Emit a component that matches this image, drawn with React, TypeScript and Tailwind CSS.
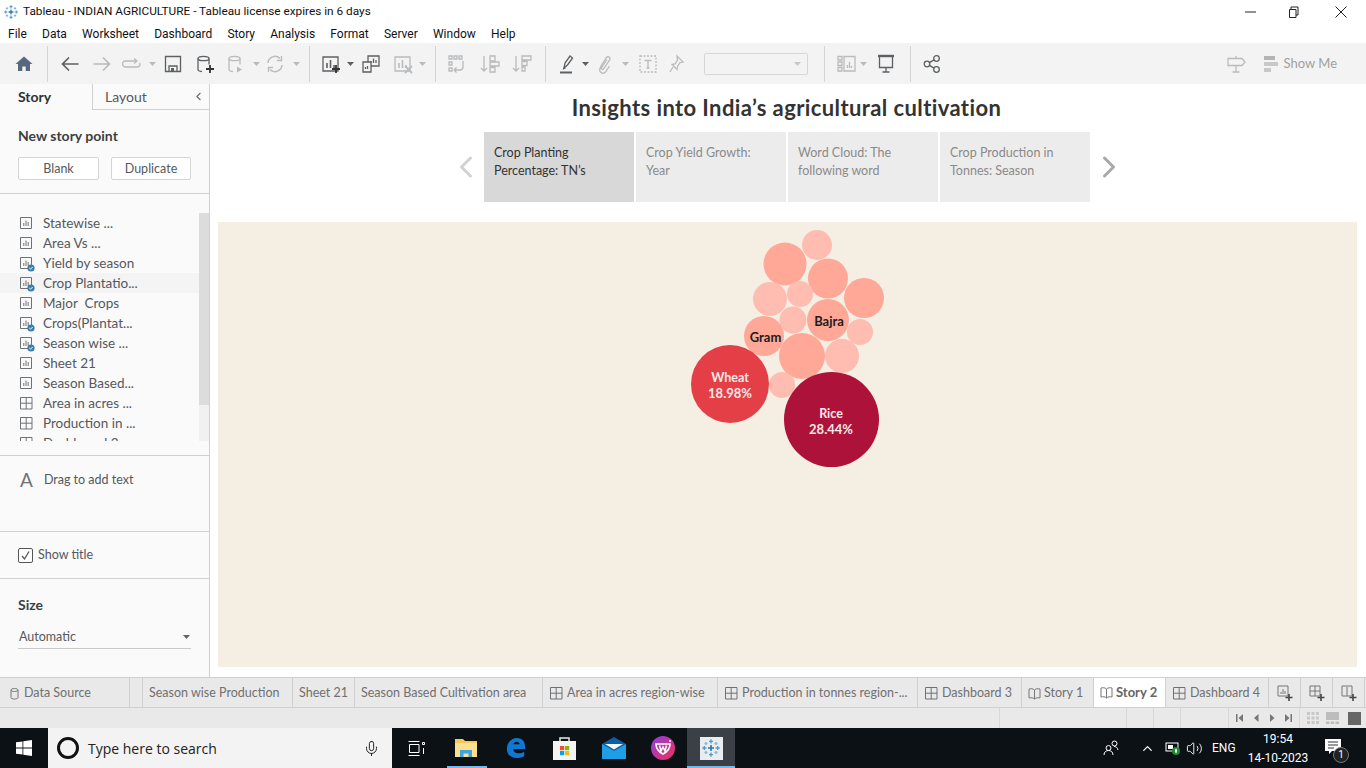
import React from "react";
import { ChevronLeft, ChevronRight, ChevronUp, Mic, Volume2 } from "lucide-react";

const GREY = "#5d6063";
const DIS = "#b9bbbd";

const menus = ["File", "Data", "Worksheet", "Dashboard", "Story", "Analysis", "Format", "Server", "Window", "Help"];

const TableauLogo = ({ size = 16 }: { size?: number }) => (
    <svg width={size} height={size} viewBox="0 0 16 16">
        <g strokeWidth="1.1" fill="none">
            <path d="M8 1v3.400M6.400 2.700h3.200M8 11.600V15M6.400 13.300h3.200M1 8h3.400M2.700 6.400v3.200M11.600 8H15M13.300 6.400v3.200" stroke="#5b9ac8" />
            <path d="M4 3.200v2.400M2.800 4.400h2.400M12 3.200v2.400M10.800 4.400h2.400M4 10.400v2.400M2.800 11.600h2.400M12 10.400v2.400M10.800 11.600h2.400" stroke="#86b6d8" />
            <path d="M8 5.600v4.800M5.600 8h4.800" stroke="#2f75a8" strokeWidth="1.300" />
        </g>
    </svg>
);

const Caret = ({ color = DIS }: { color?: string }) => (
    <svg width="7" height="4" viewBox="0 0 7 4"><path d="M0 0h7L3.500 4z" fill={color} /></svg>
);

const Sep = ({ className = "" }: { className?: string }) => <div className={`w-px h-[36px] bg-[#d4d4d4] shrink-0 ${className}`} />;

const Ico = ({ children }: { children: React.ReactNode }) => (
    <svg width="20" height="20" viewBox="0 0 20 20" fill="none" strokeWidth="1.3">{children}</svg>
);

// icon slot, default 20 wide; left margin on each one sets the toolbar spacing
const Slot = ({ className = "w-[20px]", children }: { className?: string; children: React.ReactNode }) => (
    <div className={`flex items-center justify-center shrink-0 h-full ${className}`}>{children}</div>
);

const CaretSlot = ({ className, color }: { className: string; color?: string }) => (
    <Slot className={`w-[10px] ${className}`}><Caret color={color} /></Slot>
);

const Toolbar = () => (
    <div className="h-[41px] bg-[#f3f3f3] flex items-center shrink-0">
        <Slot className="w-[20px] ml-[14px]">
            <Ico><path d="M10 2.500 1.500 10H4v7h4.300v-4.500h3.400V17H16v-7h2.500z" fill="#56687c" /></Ico>
        </Slot>
        <Sep className="ml-[13px]" />
        <Slot className="w-[20px] ml-[12px]"><Ico><path d="M18.500 10H3M9 3.500 2.500 10 9 16.500" stroke={GREY} strokeWidth="1.700" /></Ico></Slot>
        <Slot className="w-[20px] ml-[12px]"><Ico><path d="M1.500 10h15M11 3.500 17.500 10 11 16.500" stroke={DIS} strokeWidth="1.700" /></Ico></Slot>
        <Slot className="w-[20px] ml-[10px]"><Ico><path d="M14 7H3.500a2.500 2.500 0 0 0 0 6h12a2.500 2.500 0 0 0 2-4M12 4.500 15 7l-3 2.500" stroke={DIS} /></Ico></Slot>
        <CaretSlot className="ml-[5px]" />
        <Slot className="w-[20px] ml-[6px]">
            <Ico>
                <path d="M2.500 2.500h15v15h-15z" stroke={GREY} />
                <path d="M6 17v-5h8v5" stroke={GREY} />
                <rect x="8" y="14" width="3" height="3" fill={GREY} />
            </Ico>
        </Slot>
        <Slot className="w-[20px] ml-[12px]">
            <Ico>
                <ellipse cx="8.500" cy="4.500" rx="5.500" ry="2.200" stroke={GREY} />
                <path d="M3 4.500v11c0 1 1.500 1.800 4 2M14 4.500v6" stroke={GREY} />
                <path d="M15 11v8M11 15h8" stroke="#333" strokeWidth="1.800" />
            </Ico>
        </Slot>
        <Slot className="w-[20px] ml-[11px]">
            <Ico>
                <ellipse cx="8.500" cy="4.500" rx="5.500" ry="2.200" stroke={DIS} />
                <path d="M3 4.500v11c0 1 1.500 1.800 4 2M14 4.500v6" stroke={DIS} />
                <path d="M11 12.500v6l5-3z" fill={DIS} />
            </Ico>
        </Slot>
        <CaretSlot className="ml-[5px]" />
        <Slot className="w-[20px] ml-[4px]">
            <Ico>
                <path d="M3 9a7 7 0 0 1 12-4.500M17 11a7 7 0 0 1-12 4.500" stroke={DIS} strokeWidth="1.500" />
                <path d="M16.500 2v4.500H12M3.500 18v-4.500H8" stroke={DIS} />
            </Ico>
        </Slot>
        <CaretSlot className="ml-[6px]" />
        <Sep className="ml-[8px]" />
        <Slot className="w-[20px] ml-[11px]">
            <Ico>
                <path d="M2 3h15v14H2z" stroke={GREY} />
                <path d="M6 14V9M9.500 14V6M13 14v-3" stroke={GREY} strokeWidth="1.600" />
                <path d="M15 11v8M11 15h8" stroke="#333" strokeWidth="1.800" />
            </Ico>
        </Slot>
        <CaretSlot className="ml-[4px]" color={GREY} />
        <Slot className="w-[20px] ml-[6px]">
            <Ico>
                <path d="M7 2h11v10H7z" stroke={GREY} />
                <path d="M10 9V7M12.500 9V4.500M15 9V6" stroke={GREY} />
                <path d="M2 8h8v10H2z" fill="#f3f3f3" stroke={GREY} />
                <path d="M4.500 15v-2M6.500 15v-3" stroke={GREY} />
            </Ico>
        </Slot>
        <Slot className="w-[20px] ml-[12px]">
            <Ico>
                <path d="M2 3h15v14H2z" stroke={DIS} />
                <path d="M6 14V9M9.500 14V6M13 14v-3" stroke={DIS} strokeWidth="1.600" />
                <path d="m12 12 7 7M19 12l-7 7" stroke={DIS} strokeWidth="1.800" />
            </Ico>
        </Slot>
        <CaretSlot className="ml-[4px]" />
        <Sep className="ml-[8px]" />
        <Slot className="w-[20px] ml-[11px]">
            <Ico>
                <path d="M2 2h3v3H2zM7 2h3v3H7zM12 2h3v3h-3zM2 8h3v3H2zM2 14h3v3H2z" stroke={DIS} />
                <path d="M16 7v6a3 3 0 0 1-3 3H8M9.500 13.500 7 16l2.500 2.500" stroke={DIS} />
            </Ico>
        </Slot>
        <Slot className="w-[20px] ml-[13px]">
            <Ico>
                <path d="M4 2v15M1 14l3 3 3-3" stroke={DIS} />
                <path d="M10 2h5v5h-5zM10 8h9v4h-9zM10 13.500h5V18h-5z" stroke={DIS} />
            </Ico>
        </Slot>
        <Slot className="w-[20px] ml-[12px]">
            <Ico>
                <path d="M4 2v15M1 14l3 3 3-3" stroke={DIS} />
                <path d="M10 2h9v4h-9zM10 7.500h5v4h-5zM10 13h3v4h-3z" stroke={DIS} />
            </Ico>
        </Slot>
        <Sep className="ml-[13px]" />
        <Slot className="w-[20px] ml-[11px]">
            <Ico>
                <path d="m7 14 1-5 5-7 2.500 2-5 7z" stroke={GREY} />
                <path d="M3 18.500h12" stroke={GREY} strokeWidth="2" />
                <path d="M5.500 15.500 7 13l2 1.500z" fill={GREY} />
            </Ico>
        </Slot>
        <CaretSlot className="ml-[3px]" color={GREY} />
        <Slot className="w-[20px] ml-[5px]">
            <Ico>
                <path d="m6 12 5.500-8.500a2 2 0 0 1 3.300 2.200L8.500 15a1.200 1.200 0 0 1-2-1.300L12 5.500M6 12l-1 2.500a3.300 3.300 0 0 0 5.500 3.500l4-6" stroke={DIS} />
            </Ico>
        </Slot>
        <CaretSlot className="ml-[5px]" />
        <Slot className="w-[20px] ml-[8px]">
            <Ico>
                <path d="M2 2h16v16H2z" stroke={DIS} strokeDasharray="2 1.500" />
                <path d="M6.500 6.500h7M10 6.500v7.500M8.500 14h3" stroke={DIS} />
            </Ico>
        </Slot>
        <Slot className="w-[20px] ml-[9px]">
            <Ico>
                <path d="m10 2 6 6-3 .5-2.500 4-.5 3-5-5 3-.5 2.500-4zM6 13l-3 5" stroke={DIS} />
            </Ico>
        </Slot>
        <div className="w-[104px] h-[22px] ml-[17px] shrink-0 border border-[#d6d6d6] rounded-[2px] flex items-center justify-end pr-[6px]">
            <Caret color="#c8c8c8" />
        </div>
        <Sep className="ml-[16px]" />
        <Slot className="w-[20px] ml-[11px]">
            <Ico>
                <path d="M2 2.500h4V6H2zM2 8h4v3.500H2zM2 13.500h4V17H2zM8 2.500h11V17H8z" stroke={DIS} />
                <path d="M11.500 14v-3M13.500 14V8M15.500 14v-2" stroke={DIS} />
            </Ico>
        </Slot>
        <CaretSlot className="ml-[2px]" />
        <Slot className="w-[20px] ml-[8px]">
            <Ico>
                <path d="M2 2h16" stroke={GREY} strokeWidth="2.400" />
                <path d="M3.500 3v10.500h13V3M10 13.500V18M6.500 18h7" stroke={GREY} />
            </Ico>
        </Slot>
        <Sep className="ml-[14px]" />
        <Slot className="w-[20px] ml-[11px]">
            <Ico>
                <circle cx="5" cy="10" r="2.800" stroke={GREY} />
                <circle cx="14.500" cy="4.500" r="2.800" stroke={GREY} />
                <circle cx="14.500" cy="15.500" r="2.800" stroke={GREY} />
                <path d="m7.400 8.600 4.700-2.700M7.400 11.400l4.700 2.700" stroke={GREY} />
            </Ico>
        </Slot>
        <div className="flex-1" />
        <Ico>
            <path d="M2 4.500h14l3 3.500-3 3.500H2zM10 11.500V18M6.500 18h7M10 2v2.500" stroke={DIS} />
        </Ico>
        <div className="w-[18px] shrink-0" />
        <div className="w-[18px] h-[20px] flex flex-col gap-[2px] justify-center shrink-0">
            <div className="h-[4px] w-[11px] bg-[#b4b4b4]" />
            <div className="h-[4px] w-[14px] bg-[#c8c8c8]" />
            <div className="h-[4px] w-[7px] bg-[#c8c8c8]" />
        </div>
        <span className="text-[13px] text-[#a0a0a0] mr-[29px] ml-[2px]">Show Me</span>
    </div>
);

const SheetIcon = ({ ok }: { ok?: boolean }) => (
    <svg width="15" height="15" viewBox="0 0 15 15" fill="none" className="overflow-visible">
        <path d="M1.500 1.500h11v11h-11z" stroke="#6f7275" />
        <path d="M4.800 10V7M7 10V4.500M9.200 10V6" stroke="#6f7275" />
        {ok && (
            <>
                <circle cx="12" cy="12" r="3.600" fill="#3c7fa6" />
                <path d="m10.300 12 1.200 1.200 2.100-2.200" stroke="#fff" strokeWidth="1" />
            </>
        )}
    </svg>
);

const GridIcon = () => (
    <svg width="15" height="15" viewBox="0 0 15 15" fill="none">
        <path d="M1.500 1.500h11.500v11.500H1.500zM7.200 1.500v11.500M1.500 7.200h11.500" stroke="#6f7275" />
    </svg>
);

const sheets = [
    { name: "Statewise ...", ok: false },
    { name: "Area Vs ...", ok: false },
    { name: "Yield by season", ok: true },
    { name: "Crop Plantatio...", ok: true, hover: true },
    { name: "Major  Crops", ok: false },
    { name: "Crops(Plantat...", ok: true },
    { name: "Season wise ...", ok: true },
    { name: "Sheet 21", ok: false },
    { name: "Season Based...", ok: false },
    { name: "Area in acres ...", grid: true },
    { name: "Production in ...", grid: true },
    { name: "Dashboard 3", grid: true },
];

const Sidebar = () => (
    <div className="w-[210px] shrink-0 h-full bg-[#fafafa] border-r border-[#d0d0d0] flex flex-col text-[#55585c]">
        <div className="h-[26px] flex text-[14px] shrink-0">
            <div className="w-[92px] pl-[18px] font-bold text-[#2f3235] leading-[26px]">Story</div>
            <div className="flex-1 border-l border-b border-[#d0d0d0] pl-[12px] leading-[26px] flex justify-between items-center pr-[4px]">
                Layout
                <ChevronLeft size={13} color="#6a6a6a" />
            </div>
        </div>
        <div className="h-[84px] border-b border-[#d0d0d0] pl-[18px] shrink-0">
            <div className="text-[14px] font-bold text-[#3b3e42] mt-[17px] leading-[18px]">New story point</div>
            <div className="flex gap-[12px] mt-[12px] text-[12.5px]">
                <div className="w-[81px] h-[23px] bg-white border border-[#d4d4d4] rounded-[2px] text-center leading-[21px]">Blank</div>
                <div className="w-[80px] h-[23px] bg-white border border-[#d4d4d4] rounded-[2px] text-center leading-[21px]">Duplicate</div>
            </div>
        </div>
        <div className="h-[262px] border-b border-[#d0d0d0] pt-[19px] shrink-0">
            <div className="h-[228px] overflow-hidden relative">
                {sheets.map((s) => (
                    <div key={s.name} className={`h-[20px] flex items-center pl-[19px] gap-[9px] text-[13.5px] w-[199px] ${s.hover ? "bg-[#f4f4f4]" : ""}`}>
                        {s.grid ? <GridIcon /> : <SheetIcon ok={s.ok} />}
                        <span className="whitespace-pre">{s.name}</span>
                    </div>
                ))}
                <div className="absolute right-0 top-0 w-[10px] h-full bg-[#f1f1f1]">
                    <div className="h-[192px] bg-[#dcdcdc]" />
                </div>
            </div>
        </div>
        <div className="h-[76px] border-b border-[#d0d0d0] flex items-start pl-[20px] gap-[11px] pt-[14px] shrink-0">
            <span className="text-[19px] text-[#6f7275] leading-[20px]">A</span>
            <span className="text-[12.5px] leading-[20px]">Drag to add text</span>
        </div>
        <div className="h-[47px] border-b border-[#d0d0d0] flex items-center pl-[18px] gap-[5px] text-[12.5px] shrink-0">
            <div className="w-[15px] h-[15px] border border-[#555] rounded-[2px] flex items-center justify-center bg-white">
                <svg width="11" height="11" viewBox="0 0 11 11" fill="none"><path d="m2 6 2.500 3L9 1.500" stroke="#555" strokeWidth="1.300" /></svg>
            </div>
            Show title
        </div>
        <div className="pl-[18px] pr-[18px]">
            <div className="text-[14px] font-bold text-[#3b3e42] mt-[16px] leading-[20px]">Size</div>
            <div className="mt-[11px] h-[23px] border-b border-[#c8c8c8] flex items-center justify-between text-[12.5px] pl-px">
                Automatic
                <span className="mr-[1px]"><Caret color="#666" /></span>
            </div>
        </div>
    </div>
);

// x, y, r in page pixels minus the canvas origin
const bubbles = [
    { x: 599, y: 23, r: 15, c: "#ffbcb0" },
    { x: 567, y: 42, r: 21.5, c: "#ffa898" },
    { x: 610, y: 56.5, r: 20, c: "#ffa898" },
    { x: 646, y: 76, r: 20, c: "#ffa898" },
    { x: 552, y: 77, r: 17, c: "#ffbcb0" },
    { x: 582, y: 72, r: 13, c: "#ffbcb0" },
    { x: 575, y: 98, r: 13.5, c: "#ffbcb0" },
    { x: 610, y: 98, r: 21, c: "#ffa898" },
    { x: 642, y: 110, r: 13, c: "#ffbcb0" },
    { x: 546, y: 114, r: 20, c: "#ffa898" },
    { x: 584, y: 134, r: 23, c: "#ffa898" },
    { x: 624, y: 134, r: 17, c: "#ffbcb0" },
    { x: 564, y: 163, r: 13, c: "#ffbcb0" },
    { x: 512, y: 162, r: 39, c: "#e43f47" },
    { x: 613.5, y: 197.5, r: 47.5, c: "#ad123a" },
];

const Bubbles = () => (
    <svg width="800" height="260" viewBox="0 0 800 260" className="block" style={{ fontFamily: "Lato, sans-serif" }}>
        {bubbles.map((b) => (
            <circle key={`${b.x}-${b.y}`} cx={b.x} cy={b.y} r={b.r} fill={b.c} />
        ))}
        <g textAnchor="middle" fontWeight="700">
            <text x="611" y="104" fill="#1c1c1c" fontSize="13">Bajra</text>
            <text x="547.5" y="120" fill="#1c1c1c" fontSize="13">Gram</text>
            <text x="512" y="160" fill="#fbe9e9" fontSize="12.5">Wheat</text>
            <text x="512" y="176" fill="#fbe9e9" fontSize="13">18.98%</text>
            <text x="613" y="196" fill="#fbe9e9" fontSize="12.5">Rice</text>
            <text x="613" y="212" fill="#fbe9e9" fontSize="13">28.44%</text>
        </g>
    </svg>
);

const points = [
    { l1: "Crop Planting", l2: "Percentage: TN’s", active: true },
    { l1: "Crop Yield Growth:", l2: "Year" },
    { l1: "Word Cloud: The", l2: "following word" },
    { l1: "Crop Production in", l2: "Tonnes: Season" },
];

const Story = () => (
    <div className="flex-1 h-full bg-white flex flex-col min-w-0" style={{ fontFamily: "Lato, sans-serif" }}>
        <div className="h-[48px] flex items-center justify-center text-[22px] font-bold text-[#333] tracking-[0.4px] shrink-0 pb-[1px] pr-[3px]">
            Insights into India’s agricultural cultivation
        </div>
        <div className="h-[70px] flex items-center justify-center gap-[2px] shrink-0 pr-[1px]">
            <ChevronLeft size={36} strokeWidth={2} color="#d2d2d2" className="mr-[-2px] ml-[-8px]" />
            {points.map((p) => (
                <div
                    key={p.l1}
                    className={`w-[150px] h-[70px] pl-[10.5px] text-[12.5px] leading-[18px] pt-[11px] ${p.active ? "bg-[#d8d8d8] text-[#333]" : "bg-[#ececec] text-[#8a8a8a]"}`}
                >
                    <div className="mt-px">{p.l1}</div>
                    <div>{p.l2}</div>
                </div>
            ))}
            <ChevronRight size={36} strokeWidth={2} color="#a8a8a8" className="ml-[-1px] mr-[-7px]" />
        </div>
        <div className="flex-1 mt-[20px] mb-[10px] ml-[8px] mr-[9px] bg-[#f5eee3] overflow-hidden">
            <Bubbles />
        </div>
    </div>
);

const tabs = [
    { w: "w-[130px]", name: "Data Source", icon: "db" },
    { w: "w-[13px]", name: "" },
    { w: "w-[150px]", name: "Season wise Production" },
    { w: "w-[62px]", name: "Sheet 21" },
    { w: "w-[188px]", name: "Season Based Cultivation area" },
    { w: "w-[175px]", name: "Area in acres region-wise", icon: "grid" },
    { w: "w-[200px]", name: "Production in tonnes region-...", icon: "grid" },
    { w: "w-[104px]", name: "Dashboard 3", icon: "grid" },
    { w: "w-[72px]", name: "Story 1", icon: "book" },
    { w: "w-[72px]", name: "Story 2", icon: "book", active: true },
    { w: "w-[103px]", name: "Dashboard 4", icon: "grid" },
];

const BookIcon = () => (
    <svg width="13" height="13" viewBox="0 0 13 13" fill="none">
        <path d="M6.500 3C5 1.600 3 1.500 1 2v9c2-.5 4-.4 5.500 1 1.500-1.400 3.500-1.500 5.500-1V2c-2-.5-4-.4-5.500 1zM6.500 3v9" stroke="#777" />
    </svg>
);

const TabBar = () => (
    <div className="h-[31px] bg-[#e9e9e9] border-t border-b border-[#d0d0d0] flex shrink-0 text-[12.5px] text-[#707070]" style={{ fontFamily: "Lato, sans-serif" }}>
        {tabs.map((t) => (
            <div
                key={t.w + t.name}
                className={`h-full shrink-0 flex items-center gap-[3px] border-r border-[#d0d0d0] whitespace-nowrap ${t.w} ${t.active ? "bg-white font-bold pl-[6px] text-[#666] text-[13px]" : "pl-[6px] pt-px"} ${t.icon === "db" ? "pl-[10px] gap-[5px]" : ""}`}
            >
                {t.icon === "db" && (
                    <svg width="9" height="13" viewBox="0 0 9 13" fill="none"><path d="M1 3v7.500c0 2 7 2 7 0V3M1 3c0-2 7-2 7 0s-7 2-7 0z" stroke="#777" /></svg>
                )}
                {t.icon === "grid" && <GridIcon />}
                {t.icon === "book" && <BookIcon />}
                {t.name}
            </div>
        ))}
        {[0, 1, 2].map((i) => (
            <div key={i} className="w-[32px] h-full shrink-0 border-r border-[#d0d0d0] flex items-center justify-center">
                <svg width="16" height="16" viewBox="0 0 16 16" fill="none">
                    <path d="M1 1h10v10H1z" stroke="#777" />
                    {i === 0 ? <path d="M4 9V7M6 9V4M8 9V6" stroke="#777" /> : i === 1 ? <path d="M6 1v10M1 6h10" stroke="#777" /> : <path d="M6 2v9" stroke="#777" />}
                    <path d="M12 9v7M8.500 12.500h7" stroke="#444" strokeWidth="1.600" />
                </svg>
            </div>
        ))}
    </div>
);

const Nav = ({ d }: { d: string }) => (
    <svg width="8" height="8" viewBox="0 0 8 8"><path d={d} fill="#777" /></svg>
);

const StatusBar = () => (
    <div className="h-[20px] bg-[#e9e9e9] flex justify-end shrink-0">
        <div className="w-[127px] h-full border-l border-[#d8d8d8]" />
        <div className="w-[27px] h-full border-l border-[#d8d8d8]" />
        <div className="w-[27px] h-full border-l border-[#d8d8d8]" />
        <div className="w-[48px] h-full border-l border-[#d8d8d8]" />
        <div className="w-[71px] h-full border-l border-[#d8d8d8] flex items-center justify-center gap-[8px]">
            <Nav d="M0 0h1.500v8H0zM7 0v8L2.500 4z" />
            <Nav d="M6.500 0v8L2 4z" />
            <Nav d="M2 0v8l4.500-4z" />
            <Nav d="M1 0v8l4.500-4zM6.500 0H8v8H6.500z" />
        </div>
        <div className="w-[67px] h-full border-l border-[#d8d8d8] flex items-center gap-[7px] pl-[7px]">
            <svg width="12" height="12" viewBox="0 0 12 12" fill="#c8c8c8">
                <path d="M0 0h3v3H0zM4.500 0h3v3h-3zM9 0h3v3H9zM0 4.500h3v3H0zM4.500 4.500h3v3h-3zM9 4.500h3v3H9zM0 9h3v3H0zM4.500 9h3v3h-3zM9 9h3v3H9z" />
            </svg>
            <svg width="13" height="12" viewBox="0 0 13 12" fill="#bdbdbd">
                <path d="M0 0h13v8H0zM0 9.500h3.500V12H0zM4.700 9.500h3.500V12H4.700zM9.400 9.500H13V12H9.400z" />
            </svg>
            <div className="w-[13px] h-[13px] bg-[#666] ml-[2px]" />
        </div>
    </div>
);

const Taskbar = () => (
    <div className="h-[40px] bg-[#0c1116] flex items-center shrink-0 text-white" style={{ fontFamily: "Roboto, sans-serif" }}>
        <div className="w-[48px] flex justify-center">
            <svg width="16" height="16" viewBox="0 0 16 16" fill="#fff"><path d="M0 2.300 6.500 1.400V7.600H0zM7.300 1.300 16 0v7.600H7.300zM0 8.400h6.500v6.200L0 13.700zM7.300 8.400H16V16l-8.700-1.200z" /></svg>
        </div>
        <div className="w-[344px] h-full bg-[#f3f3f3] flex items-center pl-[9px] text-[#222] text-[14px] relative" style={{ fontFamily: "'Open Sans', sans-serif" }}>
            <div className="w-[22px] h-[22px] rounded-full border-[3px] border-[#111]" />
            <span className="ml-[9px]">Type here to search</span>
            <Mic size={17} strokeWidth={1.400} color="#222" className="absolute right-[12px] top-[12px]" />
        </div>
        <div className="w-[48px] flex justify-center">
            <svg width="17" height="17" viewBox="0 0 17 17" fill="none" stroke="#fff"><path d="M.5 1.500h11M.5 15.500h11M1.500 4.500h9.500v8H1.500zM14.500 2.500h2v2h-2zM15.500 8v6" /></svg>
        </div>
        <div className="w-[50px] h-full flex items-center justify-center relative ml-[1px]">
            <svg width="22" height="18" viewBox="0 0 22 18">
                <path d="M0 0h8l2 2h12v16H0z" fill="#f3c95c" />
                <path d="M0 4h22v14H0z" fill="#fbe18e" />
                <path d="M5 18v-7h12v7h-3.500v-3.500h-5V18z" fill="#3fa3e0" />
            </svg>
            <div className="absolute bottom-0 left-[6px] w-[40px] h-[2px] bg-[#76b9ed]" />
        </div>
        <div className="w-[49px] flex justify-center">
            <svg width="20" height="22" viewBox="0 0 22 24"><path d="M1 13C1 5 7 1 12 1c6 0 9 4 9 10v2H8c0 5 7 6 12 3v5c-8 4-19 2-19-8zm7-5h7c0-4-6-4-7 0z" fill="#0f78d4" /></svg>
        </div>
        <div className="w-[49px] flex justify-center">
            <svg width="23" height="24" viewBox="0 0 23 24">
                <path d="M7 6V2h9v4" fill="none" stroke="#e8e8e8" strokeWidth="1.500" />
                <rect y="5" width="23" height="19" fill="#f4f4f4" />
                <rect x="7" y="10" width="4.200" height="4.200" fill="#f25022" />
                <rect x="12" y="10" width="4.200" height="4.200" fill="#7fba00" />
                <rect x="7" y="15" width="4.200" height="4.200" fill="#00a4ef" />
                <rect x="12" y="15" width="4.200" height="4.200" fill="#ffb900" />
            </svg>
        </div>
        <div className="w-[49px] flex justify-center">
            <svg width="24" height="22" viewBox="0 0 24 22">
                <path d="M0 7 12 0l12 7v3L12 16 0 10z" fill="#0b5fa8" />
                <path d="M3 7h18l-9 5.500z" fill="#f2f6f9" />
                <path d="M0 7v15h24V7l-12 7z" fill="#1f9de6" />
            </svg>
        </div>
        <div className="w-[49px] flex justify-center">
            <svg width="24" height="24" viewBox="0 0 24 24">
                <defs>
                    <linearGradient id="wps" x1="0" y1="0" x2="1" y2="1">
                        <stop offset="0" stopColor="#8a3fe0" />
                        <stop offset="1" stopColor="#f52f57" />
                    </linearGradient>
                </defs>
                <circle cx="12" cy="12" r="12" fill="url(#wps)" />
                <path d="M5 8h14c0 5-3 8-7 10C8 16 5 13 5 8z" fill="none" stroke="#fff" strokeWidth="1.600" />
                <path d="M8.500 9.500 10 15l2-4 2 4 1.500-5.500" fill="none" stroke="#fff" strokeWidth="1.600" />
                <circle cx="19" cy="5" r="1" fill="#fff" />
            </svg>
        </div>
        <div className="w-[48px] h-full bg-[#3a4046] flex items-center justify-center relative">
            <div className="w-[23px] h-[23px] bg-[#e9edf0] flex items-center justify-center"><TableauLogo size={20} /></div>
            <div className="absolute bottom-0 left-0 w-full h-[2px] bg-[#76b9ed]" />
        </div>
        <div className="flex-1" />
        <svg width="16" height="16" viewBox="0 0 16 16" fill="none" stroke="#fff" className="mr-[21px]">
            <circle cx="5.500" cy="8" r="2.500" />
            <path d="M1 15c0-3 2-4.500 4.500-4.500S10 12 10 15" />
            <circle cx="11.500" cy="3.500" r="2.500" />
            <path d="M11 6.500c2 0 3.500 1 4 3.500" />
        </svg>
        <ChevronUp size={15} color="#fff" className="mr-[10px]" />
        <svg width="15" height="14" viewBox="0 0 15 14" className="mr-[6px]">
            <rect x="1" y="2" width="12" height="8" fill="none" stroke="#fff" />
            <rect x="3" y="4" width="5" height="4" fill="#fff" />
            <circle cx="11" cy="10" r="4" fill="#1d8a3a" />
            <path d="M11 7.500c1.500 1 1.500 3 0 5-1.500-2-1.500-4 0-5z" fill="#fff" />
        </svg>
        <Volume2 size={17} color="#fff" strokeWidth={1.300} className="mr-[9px]" />
        <span className="text-[12px] w-[24px] mr-[7px] whitespace-nowrap">ENG</span>
        <div className="w-[70px] text-center text-[12px] leading-[19px] mr-[3px] pt-[2px] whitespace-nowrap">
            <div>19:54</div>
            <div>14-10-2023</div>
        </div>
        <div className="w-[50px] relative h-full">
            <svg width="16" height="16" viewBox="0 0 16 16" className="absolute left-[9px] top-[11px]">
                <path d="M0 0h16v12H7l-3 3v-3H0z" fill="#fff" />
                <path d="M3 3h10M3 6h10M3 9h6" stroke="#333" />
            </svg>
            <div className="absolute left-[17px] top-[19px] w-[16px] h-[16px] rounded-full bg-[#222] border border-[#777] text-[10px] text-center leading-[14px]">1</div>
        </div>
    </div>
);

export default function App() {
    return (
        <div className="w-[1366px] h-[768px] overflow-hidden flex flex-col bg-white" style={{ fontFamily: "Lato, sans-serif" }}>
            <div className="h-[22px] flex items-center pl-[3px] pt-[1px] shrink-0 text-[11.8px] text-[#111]" style={{ fontFamily: "Roboto, sans-serif" }}>
                <TableauLogo />
                <span className="ml-[4px] flex-1">Tableau - INDIAN AGRICULTURE - Tableau license expires in 6 days</span>
                <svg width="11" height="2" viewBox="0 0 11 2" className="mr-[32px]"><path d="M0 1h11" stroke="#222" /></svg>
                <svg width="12" height="12" viewBox="0 0 12 12" fill="none" stroke="#222" className="mr-[35px]"><path d="M3 3V1h7v8H8M1.500 3.500h6.500v8H1.500z" /></svg>
                <svg width="12" height="12" viewBox="0 0 12 12" stroke="#222" className="mr-[19px]"><path d="m.5.5 11 11M11.500.5l-11 11" /></svg>
            </div>
            <div className="h-[21px] flex items-center pl-[8px] pt-[2px] gap-[15.2px] shrink-0 text-[12px] text-[#111]" style={{ fontFamily: "Roboto, sans-serif" }}>
                {menus.map((m) => <span key={m}>{m}</span>)}
            </div>
            <Toolbar />
            <div className="h-[593px] flex shrink-0">
                <Sidebar />
                <Story />
            </div>
            <TabBar />
            <StatusBar />
            <Taskbar />
        </div>
    );
}
